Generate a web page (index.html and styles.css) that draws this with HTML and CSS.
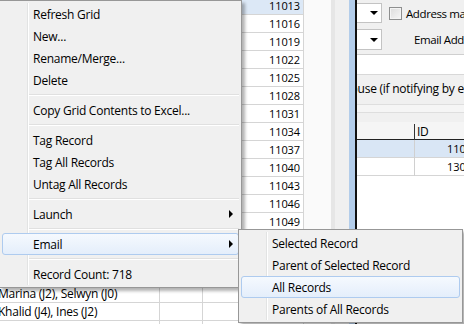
FILE: index.html
```html
<!DOCTYPE html>
<html lang="en">
<head>
    <meta charset="UTF-8">
    <title>Contacts</title>
    <link rel="stylesheet" href="styles.css">
</head>
<body>

<div class="screen">
    <div class="list-grid">
        <div class="row selected"><span class="cell name"></span><span class="cell code"></span><span class="cell id">11013</span></div>
        <div class="row"><span class="cell name"></span><span class="cell code"></span><span class="cell id">11016</span></div>
        <div class="row"><span class="cell name"></span><span class="cell code"></span><span class="cell id">11019</span></div>
        <div class="row"><span class="cell name"></span><span class="cell code"></span><span class="cell id">11022</span></div>
        <div class="row"><span class="cell name"></span><span class="cell code"></span><span class="cell id">11025</span></div>
        <div class="row"><span class="cell name"></span><span class="cell code"></span><span class="cell id">11028</span></div>
        <div class="row"><span class="cell name"></span><span class="cell code"></span><span class="cell id">11031</span></div>
        <div class="row"><span class="cell name"></span><span class="cell code"></span><span class="cell id">11034</span></div>
        <div class="row"><span class="cell name"></span><span class="cell code"></span><span class="cell id">11037</span></div>
        <div class="row"><span class="cell name"></span><span class="cell code"></span><span class="cell id">11040</span></div>
        <div class="row"><span class="cell name"></span><span class="cell code"></span><span class="cell id">11043</span></div>
        <div class="row"><span class="cell name"></span><span class="cell code"></span><span class="cell id">11046</span></div>
        <div class="row"><span class="cell name"></span><span class="cell code"></span><span class="cell id">11049</span></div>
        <div class="row"><span class="cell name"></span><span class="cell code"></span><span class="cell id"></span></div>
        <div class="row"><span class="cell name"></span><span class="cell code"></span><span class="cell id"></span></div>
        <div class="row"><span class="cell name"></span><span class="cell code"></span><span class="cell id"></span></div>
        <div class="row"><span class="cell name">Marina (J2), Selwyn (J0)</span><span class="cell code"></span><span class="cell id"></span></div>
        <div class="row"><span class="cell name">Khalid (J4), Ines (J2)</span><span class="cell code"></span><span class="cell id"></span></div>
        <div class="row"><span class="cell name"></span><span class="cell code"></span><span class="cell id"></span></div>
    </div>

    <div class="splitter">
        <div class="splitter-light"></div>
        <div class="splitter-line"></div>
        <div class="splitter-gray"></div>
    </div>
    <div class="window-edge"></div>

    <div class="detail-panel">
        <div class="field-row first">
            <div class="combo"><span class="combo-arrow"></span></div>
            <span class="checkbox"></span>
            <span class="field-label">Address mailing</span>
        </div>
        <div class="field-row second">
            <div class="combo"><span class="combo-arrow"></span></div>
            <span class="field-label email-label">Email Address</span>
        </div>
        <div class="memo-box"></div>
        <div class="hint">House (if notifying by email)</div>
        <div class="strip"></div>

        <div class="sub-grid">
            <div class="sub-row header"><span class="sub-cell"></span><span class="sub-cell id-head">ID</span></div>
            <div class="sub-row selected"><span class="sub-cell"></span><span class="sub-cell num">11013</span></div>
            <div class="sub-row"><span class="sub-cell"></span><span class="sub-cell num">13004</span></div>
        </div>
    </div>
</div>

<div class="menu context-menu">
    <div class="menu-item">Refresh Grid</div>
    <div class="menu-item">New...</div>
    <div class="menu-item">Rename/Merge...</div>
    <div class="menu-item">Delete</div>
    <div class="menu-sep"></div>
    <div class="menu-item">Copy Grid Contents to Excel...</div>
    <div class="menu-sep"></div>
    <div class="menu-item">Tag Record</div>
    <div class="menu-item">Tag All Records</div>
    <div class="menu-item">Untag All Records</div>
    <div class="menu-sep"></div>
    <div class="menu-item has-sub">Launch</div>
    <div class="menu-sep"></div>
    <div class="menu-item has-sub active">Email</div>
    <div class="menu-sep"></div>
    <div class="menu-item">Record Count: 718</div>
</div>

<div class="menu sub-menu">
    <div class="menu-item">Selected Record</div>
    <div class="menu-item">Parent of Selected Record</div>
    <div class="menu-item active">All Records</div>
    <div class="menu-item">Parents of All Records</div>
</div>

</body>
</html>
```

FILE: styles.css
```css
body {
    margin: 0;
    width: 464px;
    height: 324px;
    overflow: hidden;
    position: relative;
    background-color: #f0f0f0;
    font-family: "Open Sans", "Noto Sans", sans-serif;
    font-size: 12px;
    letter-spacing: -0.25px;
    color: #000;
}

.screen {
    display: flex;
    height: 324px;
    overflow: hidden;
}

/* left record list */
.list-grid {
    width: 304px;
    flex-shrink: 0;
    margin-top: -3px;
    background-color: #fff;
}

.row {
    display: grid;
    grid-template-columns: 160px 43px 101px;
    height: 18px;
    box-sizing: border-box;
    border-bottom: 1px solid #d5d5d5;
}

.row.selected {
    background-color: #dce8f6;
}

.cell {
    border-right: 1px solid #d5d5d5;
    line-height: 18px;
    white-space: nowrap;
    overflow: hidden;
}

.cell.name {
    text-indent: -2px;
}

.cell.id {
    text-align: right;
    padding-right: 3px;
    font-size: 11px;
    letter-spacing: -0.1px;
}

/* splitter between list and details */
.splitter {
    display: flex;
    width: 45px;
    flex-shrink: 0;
}

.splitter-light {
    width: 27px;
    background-color: #fafafa;
}

.splitter-line {
    width: 4px;
    background-color: #e6e6e6;
}

.splitter-gray {
    flex: 1;
    background-color: #f0f0f0;
}

.window-edge {
    width: 6px;
    flex-shrink: 0;
    background-color: #b3cdea;
    border-right: 2px solid #111;
}

/* right detail panel */
.detail-panel {
    flex: 1;
    overflow: hidden;
    background-color: #f0f0f0;
}

.field-row {
    display: flex;
    align-items: center;
    white-space: nowrap;
}

.field-row.first {
    margin-top: 3px;
    height: 20px;
}

.field-row.second {
    margin-top: 6px;
    height: 21px;
}

.combo {
    width: 25px;
    height: 100%;
    box-sizing: border-box;
    flex-shrink: 0;
    background-color: #fff;
    border: 1px solid #c3c3c3;
    border-left: none;
    display: flex;
    align-items: center;
    justify-content: flex-end;
    padding-right: 3px;
}

.combo-arrow {
    width: 0;
    height: 0;
    border-left: 4px solid transparent;
    border-right: 4px solid transparent;
    border-top: 4px solid #000;
}

.checkbox {
    width: 13px;
    height: 13px;
    box-sizing: border-box;
    margin-left: 7px;
    border: 1px solid #8e8f8f;
    background: linear-gradient(135deg, #dcdcdc, #f6f6f6);
    box-shadow: inset 0 0 0 1px #f4f4f4;
    flex-shrink: 0;
}

.field-label {
    margin-left: 4px;
    font-size: 11.5px;
    letter-spacing: -0.4px;
}

.field-label.email-label {
    margin-left: 32px;
}

.memo-box {
    margin-top: 4px;
    height: 19px;
    background-color: #fff;
    border-top: 1px solid #cfcfcf;
    border-bottom: 1px solid #d8d8d8;
}

.hint {
    height: 28px;
    line-height: 28px;
    white-space: nowrap;
    text-indent: -15px;
}

.strip {
    margin-top: 1px;
    height: 7px;
    border-top: 1px solid #dedede;
    border-bottom: 1px solid #dedede;
    background-color: #f5f5f5;
    margin-bottom: 9px;
}

.sub-grid {
    width: 124px;
    background-color: #fff;
    height: 200px;
}

.sub-row {
    display: grid;
    grid-template-columns: 57px 67px;
    height: 18px;
    box-sizing: border-box;
    border-bottom: 1px solid #d5d5d5;
}

.sub-row.header {
    background-color: #f5f5f5;
    border-bottom: 1px solid #222;
}

.sub-row.selected {
    background-color: #d9e6f5;
}

.sub-cell {
    line-height: 18px;
    white-space: nowrap;
}

.sub-cell + .sub-cell {
    border-left: 1px solid #d0d0d0;
}

.header .sub-cell + .sub-cell {
    border-left: 1px solid #333;
    margin-top: 2px;
    line-height: 16px;
}

.sub-cell.id-head {
    padding-left: 2px;
}

.sub-cell.num {
    text-align: right;
    padding-right: 3px;
    font-size: 11px;
    letter-spacing: -0.1px;
}

/* context menus */
.menu {
    position: absolute;
    box-sizing: border-box;
    background-color: #f0f0f0;
    border: 1px solid #979797;
    padding: 2px;
    box-shadow: 3px 3px 3px rgba(0, 0, 0, 0.3);
}

.menu::before {
    content: "";
    position: absolute;
    left: 27px;
    top: 2px;
    bottom: 2px;
    width: 1px;
    background-color: #e2e3e3;
    border-right: 1px solid #fff;
}

.context-menu {
    left: -1px;
    top: 0;
    width: 243px;
}

.sub-menu {
    left: 238px;
    top: 229px;
    width: 225px;
}

.menu-item {
    position: relative;
    height: 22px;
    line-height: 22px;
    box-sizing: border-box;
    border: 1px solid transparent;
    border-radius: 3px;
    padding-left: 30px;
    white-space: nowrap;
}

.menu-item.active {
    border-color: #aecbef;
    background: linear-gradient(#f5f9fe, #e4eefb);
}

.menu-item.has-sub::after {
    content: "";
    position: absolute;
    right: 5px;
    top: 6px;
    border-left: 4px solid #000;
    border-top: 4px solid transparent;
    border-bottom: 4px solid transparent;
}

.menu-sep {
    height: 1px;
    margin: 3px 0 3px 27px;
    background-color: #e0e0e0;
    border-bottom: 1px solid #fff;
}
```
